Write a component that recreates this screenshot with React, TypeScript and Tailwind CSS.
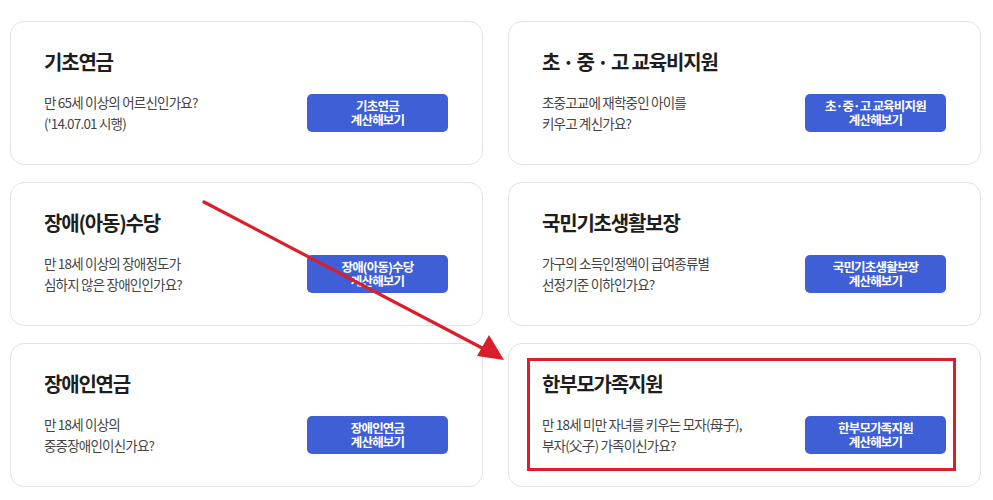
import React from "react";

type Item = { title: string; desc: [string, string]; btn: string };

const items: Item[] = [
  { title: "기초연금", desc: ["만 65세 이상의 어르신인가요?", "('14.07.01 시행)"], btn: "기초연금" },
  { title: "초 · 중 · 고 교육비지원", desc: ["초중고교에 재학중인 아이를", "키우고 계신가요?"], btn: "초·중·고 교육비지원" },
  { title: "장애(아동)수당", desc: ["만 18세 이상의 장애정도가", "심하지 않은 장애인인가요?"], btn: "장애(아동)수당" },
  { title: "국민기초생활보장", desc: ["가구의 소득인정액이 급여종류별", "선정기준 이하인가요?"], btn: "국민기초생활보장" },
  { title: "장애인연금", desc: ["만 18세 이상의", "중증장애인이신가요?"], btn: "장애인연금" },
  { title: "한부모가족지원", desc: ["만 18세 미만 자녀를 키우는 모자(母子),", "부자(父子) 가족이신가요?"], btn: "한부모가족지원" },
];

function Card({ item, highlight }: { item: Item; highlight?: boolean }) {
  return (
    <div className="relative h-[144px] rounded-[14px] border border-[#e3e3e3] bg-white pl-[33px] pr-[34px] pt-[26px]">
      <div className="whitespace-pre text-[20px] font-bold leading-[28px] tracking-[-1.2px] text-[#1e1e1e]">{item.title}</div>
      <div className="mt-[16px] flex items-center justify-between">
        <div className="text-[13.5px] leading-[21px] tracking-[-0.8px] text-[#444]">
          <div>{item.desc[0]}</div>
          <div>{item.desc[1]}</div>
        </div>
        <div className="flex h-[38px] w-[141px] flex-col items-center justify-center rounded-[5px] bg-[#3e5fd5] text-[12.5px] font-bold leading-[14px] tracking-[-0.8px] text-white">
          <div>{item.btn}</div>
          <div>계산해보기</div>
        </div>
      </div>
      {highlight && (
        <div className="absolute left-[18px] top-[14px] h-[113px] w-[429px] border-[3px] border-[#dc1e2a]" />
      )}
    </div>
  );
}

export default function App() {
  return (
    <div
      className="relative h-[500px] w-[993px] bg-white"
      style={{ fontFamily: '"Noto Sans CJK KR", "Noto Sans", sans-serif' }}
    >
      <div className="grid grid-cols-2 gap-x-[25px] gap-y-[17px] pl-[10px] pr-[12px] pt-[21px]">
        {items.map((it, i) => (
          <Card key={i} item={it} highlight={i === 5} />
        ))}
      </div>
      <svg className="pointer-events-none absolute left-0 top-0" width="993" height="500">
        <line x1="204" y1="202" x2="484" y2="349" stroke="#dc1e2a" strokeWidth="3.2" strokeLinecap="round" />
        <polygon points="504,360 477,356 489,335" fill="#dc1e2a" />
      </svg>
    </div>
  );
}
